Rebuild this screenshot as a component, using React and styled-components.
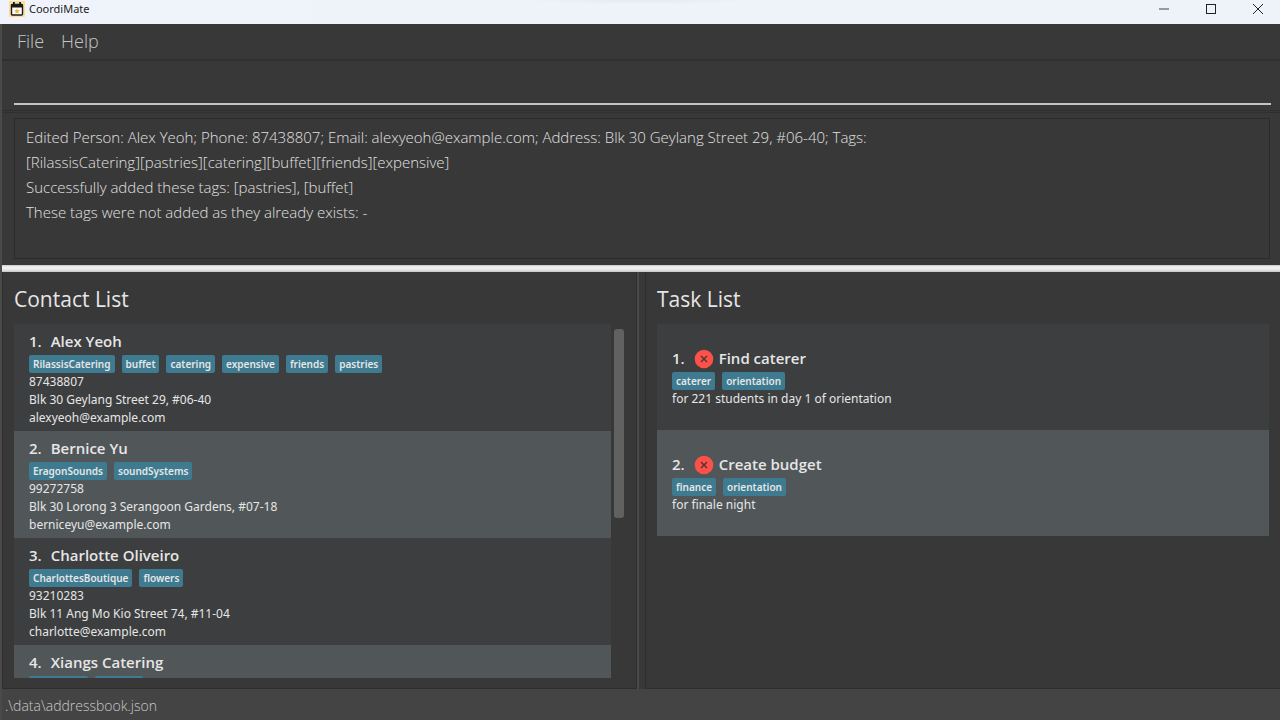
import React from "react";
import styled, { createGlobalStyle } from "styled-components";

const GlobalStyle = createGlobalStyle`
  * { box-sizing: border-box; }
  body { margin: 0; background: #383838; font-family: "Open Sans", "Noto Sans", sans-serif; }
  h2, h3, p, ul, ol { margin: 0; padding: 0; }
  ul, ol { list-style: none; }
  button, input, textarea { font-family: inherit; border: 0; outline: 0; background: none; padding: 0; }
`;

const Window = styled.div`
  display: flex;
  flex-direction: column;
  height: 100vh;
  overflow: hidden;
  color: #e6e6e6;
  background: #383838;
`;

const TitleBar = styled.header`
  flex: none;
  display: flex;
  align-items: center;
  height: 24px;
  padding: 0 14px 6px 9px;
  background:
    radial-gradient(ellipse 9% 4px at 50% 0, #e4e9ee, transparent),
    linear-gradient(90deg, #f0f3fb, #edf3f8 40%);
  color: #1c1c1c;
`;

const AppName = styled.span`
  flex: 1;
  margin-left: 4px;
  font-family: "Noto Sans", sans-serif;
  font-size: 11px;
  line-height: 18px;
`;

const WindowControls = styled.div`
  display: flex;
  gap: 31px;
`;

const WindowButton = styled.button`
  display: flex;
  align-items: center;
  justify-content: center;
  width: 16px;
  height: 18px;
`;

const Body = styled.div`
  flex: 1;
  min-height: 0;
  display: flex;
  flex-direction: column;
  border-left: 2px solid #4a4a4a;
`;

const MenuBar = styled.nav`
  flex: none;
  display: flex;
  gap: 17px;
  height: 37px;
  padding: 0 15px;
  border-bottom: 2px solid #303030;
`;

const MenuButton = styled.button`
  color: #c4c4c4;
  font-size: 18px;
  font-weight: 300;
  line-height: 35px;
`;

const CommandPane = styled.div`
  flex: none;
  padding: 8px 9px 5px 12px;
  border-bottom: 1px solid #2f2f2f;
`;

const CommandInput = styled.input`
  display: block;
  width: 100%;
  height: 36px;
  color: #fff;
  font-size: 18px;
  border-bottom: 2px solid #c4c4c4;
`;

const ResultPane = styled.div`
  flex: none;
  margin-top: 1px;
  padding: 5px 10px 6px 12px;
  border-top: 1px solid #2f2f2f;
`;

const ResultDisplay = styled.textarea`
  display: block;
  width: 100%;
  height: 141px;
  padding: 6px 11px;
  border: 1px solid #2b2b2b;
  resize: none;
  color: #e0e0e0;
  font-size: 15px;
  font-weight: 300;
  line-height: 25px;
`;

const SplitBar = styled.div`
  flex: none;
  height: 7px;
  background: linear-gradient(#c8c8c8, #f4f4f4 30%, #e6e6e6 70%, #c4c4c4);
`;

const Panes = styled.main`
  flex: 1;
  min-height: 0;
  display: grid;
  grid-template-columns: minmax(0, 1fr) 8px minmax(0, 1fr);
  grid-template-rows: minmax(0, 1fr);
`;

const Pane = styled.section`
  display: flex;
  flex-direction: column;
  min-height: 0;
  padding: 11px ${(p) => (p.$last ? 11 : 12)}px 10px 11px;
  border: solid #2e2e2e;
  border-width: 0 ${(p) => (p.$last ? 0 : 1)}px 1px 1px;
`;

const PaneDivider = styled.div`
  border-left: 2px solid #4a4a4a;
`;

const PaneTitle = styled.h2`
  font-size: 21px;
  font-weight: 500;
  line-height: 32px;
  margin-bottom: 9px;
`;

const ScrollArea = styled.div`
  flex: 1;
  min-height: 0;
  display: flex;
  gap: 3px;
`;

const List = styled.ol`
  flex: 1;
  min-width: 0;
  overflow: hidden;
`;

const ScrollTrack = styled.div`
  width: 10px;
  padding: 5px 0;
`;

const ScrollThumb = styled.div`
  height: 55%;
  border-radius: 3px;
  background: #616161;
`;

const Card = styled.li`
  display: flex;
  flex-direction: column;
  height: ${(p) => (p.$task ? 106 : 107)}px;
  padding: ${(p) => (p.$task ? 24 : 7)}px 15px 0;
  background: #3c3e3f;
  &:nth-child(even) { background: #515658; }
`;

const CardHeader = styled.h3`
  display: flex;
  align-items: center;
  gap: 9px;
  font-size: 15px;
  font-weight: 600;
  line-height: 21px;
`;

const TaskName = styled.span`
  display: flex;
  align-items: center;
  gap: 5px;
`;

const Tags = styled.ul`
  display: flex;
  gap: 7px;
  margin-top: 3px;
`;

const Tag = styled.li`
  height: 18px;
  padding: 0 4px;
  border-radius: 2px;
  background: #3e7b91;
  font-family: "Noto Sans", sans-serif;
  font-size: 10px;
  font-weight: 600;
  line-height: 18px;
`;

const Line = styled.p`
  font-family: "Noto Sans", sans-serif;
  font-size: 12px;
  line-height: 18px;
`;

const StatusBar = styled.footer`
  flex: none;
  height: 31px;
  padding: 0 3px;
  background: #444;
  color: #c8c8c8;
  font-size: 14px;
  font-weight: 300;
  line-height: 33px;
`;

const contacts = [
  { name: "Alex Yeoh", tags: ["RilassisCatering", "buffet", "catering", "expensive", "friends", "pastries"], lines: ["87438807", "Blk 30 Geylang Street 29, #06-40", "alexyeoh@example.com"] },
  { name: "Bernice Yu", tags: ["EragonSounds", "soundSystems"], lines: ["99272758", "Blk 30 Lorong 3 Serangoon Gardens, #07-18", "berniceyu@example.com"] },
  { name: "Charlotte Oliveiro", tags: ["CharlottesBoutique", "flowers"], lines: ["93210283", "Blk 11 Ang Mo Kio Street 74, #11-04", "charlotte@example.com"] },
  { name: "Xiangs Catering", tags: ["affordable", "catering"], lines: [] },
];

const tasks = [
  { name: "Find caterer", tags: ["caterer", "orientation"], lines: ["for 221 students in day 1 of orientation"] },
  { name: "Create budget", tags: ["finance", "orientation"], lines: ["for finale night"] },
];

const result = `Edited Person: Alex Yeoh; Phone: 87438807; Email: alexyeoh@example.com; Address: Blk 30 Geylang Street 29, #06-40; Tags:
[RilassisCatering][pastries][catering][buffet][friends][expensive]
Successfully added these tags: [pastries], [buffet]
These tags were not added as they already exists: -`;

const CalendarLogo = () => (
  <svg width="16" height="18" viewBox="0 0 16 18" aria-hidden="true">
    <rect x="0" y="1" width="16" height="16" rx="1" fill="#fbdf96" />
    <rect x="2.5" y="4.5" width="11" height="10.5" rx="1" fill="#fff" stroke="#1b1b1b" strokeWidth="1.4" />
    <path d="M2 4h12v3.500H2zM4 2h1.800v3H4zM10.200 2H12v3h-1.800z" fill="#1b1b1b" />
    <path d="M8 8.400l.9 1.700 1.900.3-1.400 1.300.3 1.900L8 12.700l-1.700.9.3-1.900-1.400-1.300 1.900-.3z" fill="#f5b82e" />
  </svg>
);

const PendingIcon = () => (
  <svg width="20" height="20" viewBox="0 0 20 20" role="img" aria-label="Not done">
    <circle cx="10" cy="10" r="9.300" fill="#fb5149" />
    <path d="M7 7l6 6M13 7l-6 6" stroke="#4a3434" strokeWidth="1.400" />
  </svg>
);

const EntryCard = ({ index, entry, task }) => (
  <Card $task={task}>
    <CardHeader>
      <span>{index}.</span>
      <TaskName>
        {task && <PendingIcon />}
        {entry.name}
      </TaskName>
    </CardHeader>
    <Tags>{entry.tags.map((t) => <Tag key={t}>{t}</Tag>)}</Tags>
    {entry.lines.map((l) => <Line key={l}>{l}</Line>)}
  </Card>
);

export default function App() {
  return (
    <Window>
      <GlobalStyle />
      <TitleBar>
        <CalendarLogo />
        <AppName>CoordiMate</AppName>
        <WindowControls>
          <WindowButton aria-label="Minimize">
            <svg width="10" height="10" viewBox="0 0 10 10"><path d="M0 5h10" stroke="#444" strokeWidth="1" /></svg>
          </WindowButton>
          <WindowButton aria-label="Maximize">
            <svg width="10" height="10" viewBox="0 0 10 10"><rect x=".5" y=".5" width="9" height="9" fill="none" stroke="#222" /></svg>
          </WindowButton>
          <WindowButton aria-label="Close">
            <svg width="10" height="10" viewBox="0 0 10 10"><path d="M0 0l10 10M10 0L0 10" stroke="#222" /></svg>
          </WindowButton>
        </WindowControls>
      </TitleBar>
      <Body>
        <MenuBar>
          <MenuButton>File</MenuButton>
          <MenuButton>Help</MenuButton>
        </MenuBar>
        <CommandPane>
          <CommandInput type="text" aria-label="Command" />
        </CommandPane>
        <ResultPane>
          <ResultDisplay readOnly aria-label="Result" spellCheck={false} value={result} />
        </ResultPane>
        <SplitBar />
        <Panes>
          <Pane>
            <PaneTitle>Contact List</PaneTitle>
            <ScrollArea>
              <List>{contacts.map((c, i) => <EntryCard key={c.name} index={i + 1} entry={c} />)}</List>
              <ScrollTrack><ScrollThumb /></ScrollTrack>
            </ScrollArea>
          </Pane>
          <PaneDivider />
          <Pane $last>
            <PaneTitle>Task List</PaneTitle>
            <List>{tasks.map((t, i) => <EntryCard key={t.name} index={i + 1} entry={t} task />)}</List>
          </Pane>
        </Panes>
        <StatusBar>.\data\addressbook.json</StatusBar>
      </Body>
    </Window>
  );
}
